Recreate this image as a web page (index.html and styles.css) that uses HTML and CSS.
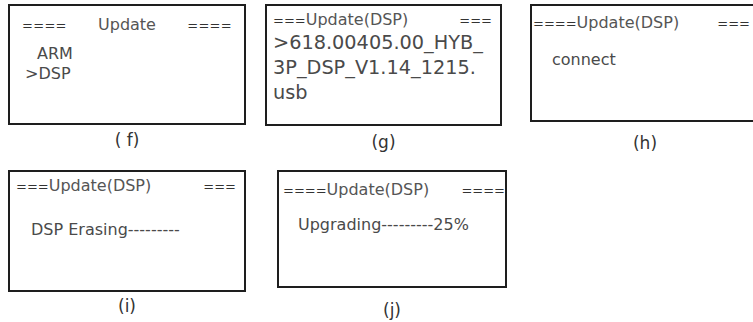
FILE: index.html
```html
<!DOCTYPE html>
<html lang="en">
<head>
    <meta charset="UTF-8">
    <title>Update DSP</title>
    <link rel="stylesheet" href="styles.css">
</head>
<body>
    <div class="row row-top">
        <div class="cell cell-f">
            <div class="screen">
                <div class="head">
                    <span class="bars">====</span>
                    <span class="title">Update</span>
                    <span class="bars">====</span>
                </div>
                <p class="line line-arm">ARM</p>
                <p class="line line-dsp">&gt;DSP</p>
            </div>
            <div class="caption">( f)</div>
        </div>
        <div class="cell cell-g">
            <div class="screen">
                <div class="head">
                    <span><span class="bars">===</span><span class="title">Update(DSP)</span></span>
                    <span class="bars">===</span>
                </div>
                <p class="file">&gt;618.00405.00_HYB_<br>3P_DSP_V1.14_1215.<br>usb</p>
            </div>
            <div class="caption">(g)</div>
        </div>
        <div class="cell cell-h">
            <div class="screen">
                <div class="head">
                    <span><span class="bars">====</span><span class="title">Update(DSP)</span></span>
                    <span class="bars">===</span>
                </div>
                <p class="line">connect</p>
            </div>
            <div class="caption">(h)</div>
        </div>
    </div>
    <div class="row row-bottom">
        <div class="cell cell-i">
            <div class="screen">
                <div class="head">
                    <span><span class="bars">===</span><span class="title">Update(DSP)</span></span>
                    <span class="bars">===</span>
                </div>
                <p class="line">DSP Erasing---------</p>
            </div>
            <div class="caption">(i)</div>
        </div>
        <div class="cell cell-j">
            <div class="screen">
                <div class="head">
                    <span><span class="bars">====</span><span class="title">Update(DSP)</span></span>
                    <span class="bars">====</span>
                </div>
                <p class="line">Upgrading---------25%</p>
            </div>
            <div class="caption">(j)</div>
        </div>
    </div>
</body>
</html>
```

FILE: styles.css
```css
body {
    margin: 0;
    width: 753px;
    height: 322px;
    overflow: hidden;
    background: #fff;
    font-family: "DejaVu Sans", "Open Sans", sans-serif;
    color: #4a4a4a;
}

.row {
    display: flex;
    align-items: flex-start;
}

.row-top {
    padding: 4px 0 0 8px;
    gap: 19px;
}

.row-bottom {
    padding: 17px 0 0 8px;
    gap: 31px;
}

.cell {
    display: flex;
    flex-direction: column;
    align-items: center;
    flex-shrink: 0;
}

.screen {
    box-sizing: border-box;
    border: 2px solid #1e1e1e;
}

.head {
    display: flex;
    justify-content: space-between;
    align-items: baseline;
    font-size: 16px;
    line-height: 20px;
    color: #555;
}

.bars {
    font-size: 13px;
    color: #333;
}

.line {
    margin: 0;
    font-size: 16px;
    line-height: 20px;
}

.caption {
    font-size: 17px;
    line-height: 20px;
    color: #333;
}

/* (f) */
.cell-f .screen { width: 238px; height: 121px; padding: 9px 12px 0 12px; }
.cell-f .bars { letter-spacing: 0.3px; }
.cell-f .line-arm { margin: 8px 0 0 15px; }
.cell-f .line-dsp { margin: 0 0 0 3px; }
.cell-f .caption { margin-top: 5px; }

/* (g) */
.cell-g .screen { width: 237px; height: 122px; padding: 5px 8px 0 6px; }
.cell-g .head { line-height: 18px; }
.file {
    margin: 0;
    font-size: 19.3px;
    line-height: 25px;
}
.cell-g .caption { margin-top: 6px; }

/* (h) */
.cell-h { margin-left: 9px; }
.cell-h .screen { width: 240px; height: 118px; padding: 7px 0 0 1px; }
.cell-h .head { width: 217px; }
.cell-h .line { margin: 16px 0 0 19px; }
.cell-h .caption { margin-top: 11px; margin-left: -10px; }

/* (i) */
.cell-i .screen { width: 238px; height: 122px; padding: 4px 8px 0 6px; }
.cell-i .line { margin: 23px 0 0 15px; }
.cell-i .caption { margin-top: 4px; }

/* (j) */
.cell-j .screen { width: 230px; height: 118px; padding: 8px 0 0 4px; }
.cell-j .line { margin: 14px 0 0 15px; }
.cell-j .caption { margin-top: 12px; }
```
